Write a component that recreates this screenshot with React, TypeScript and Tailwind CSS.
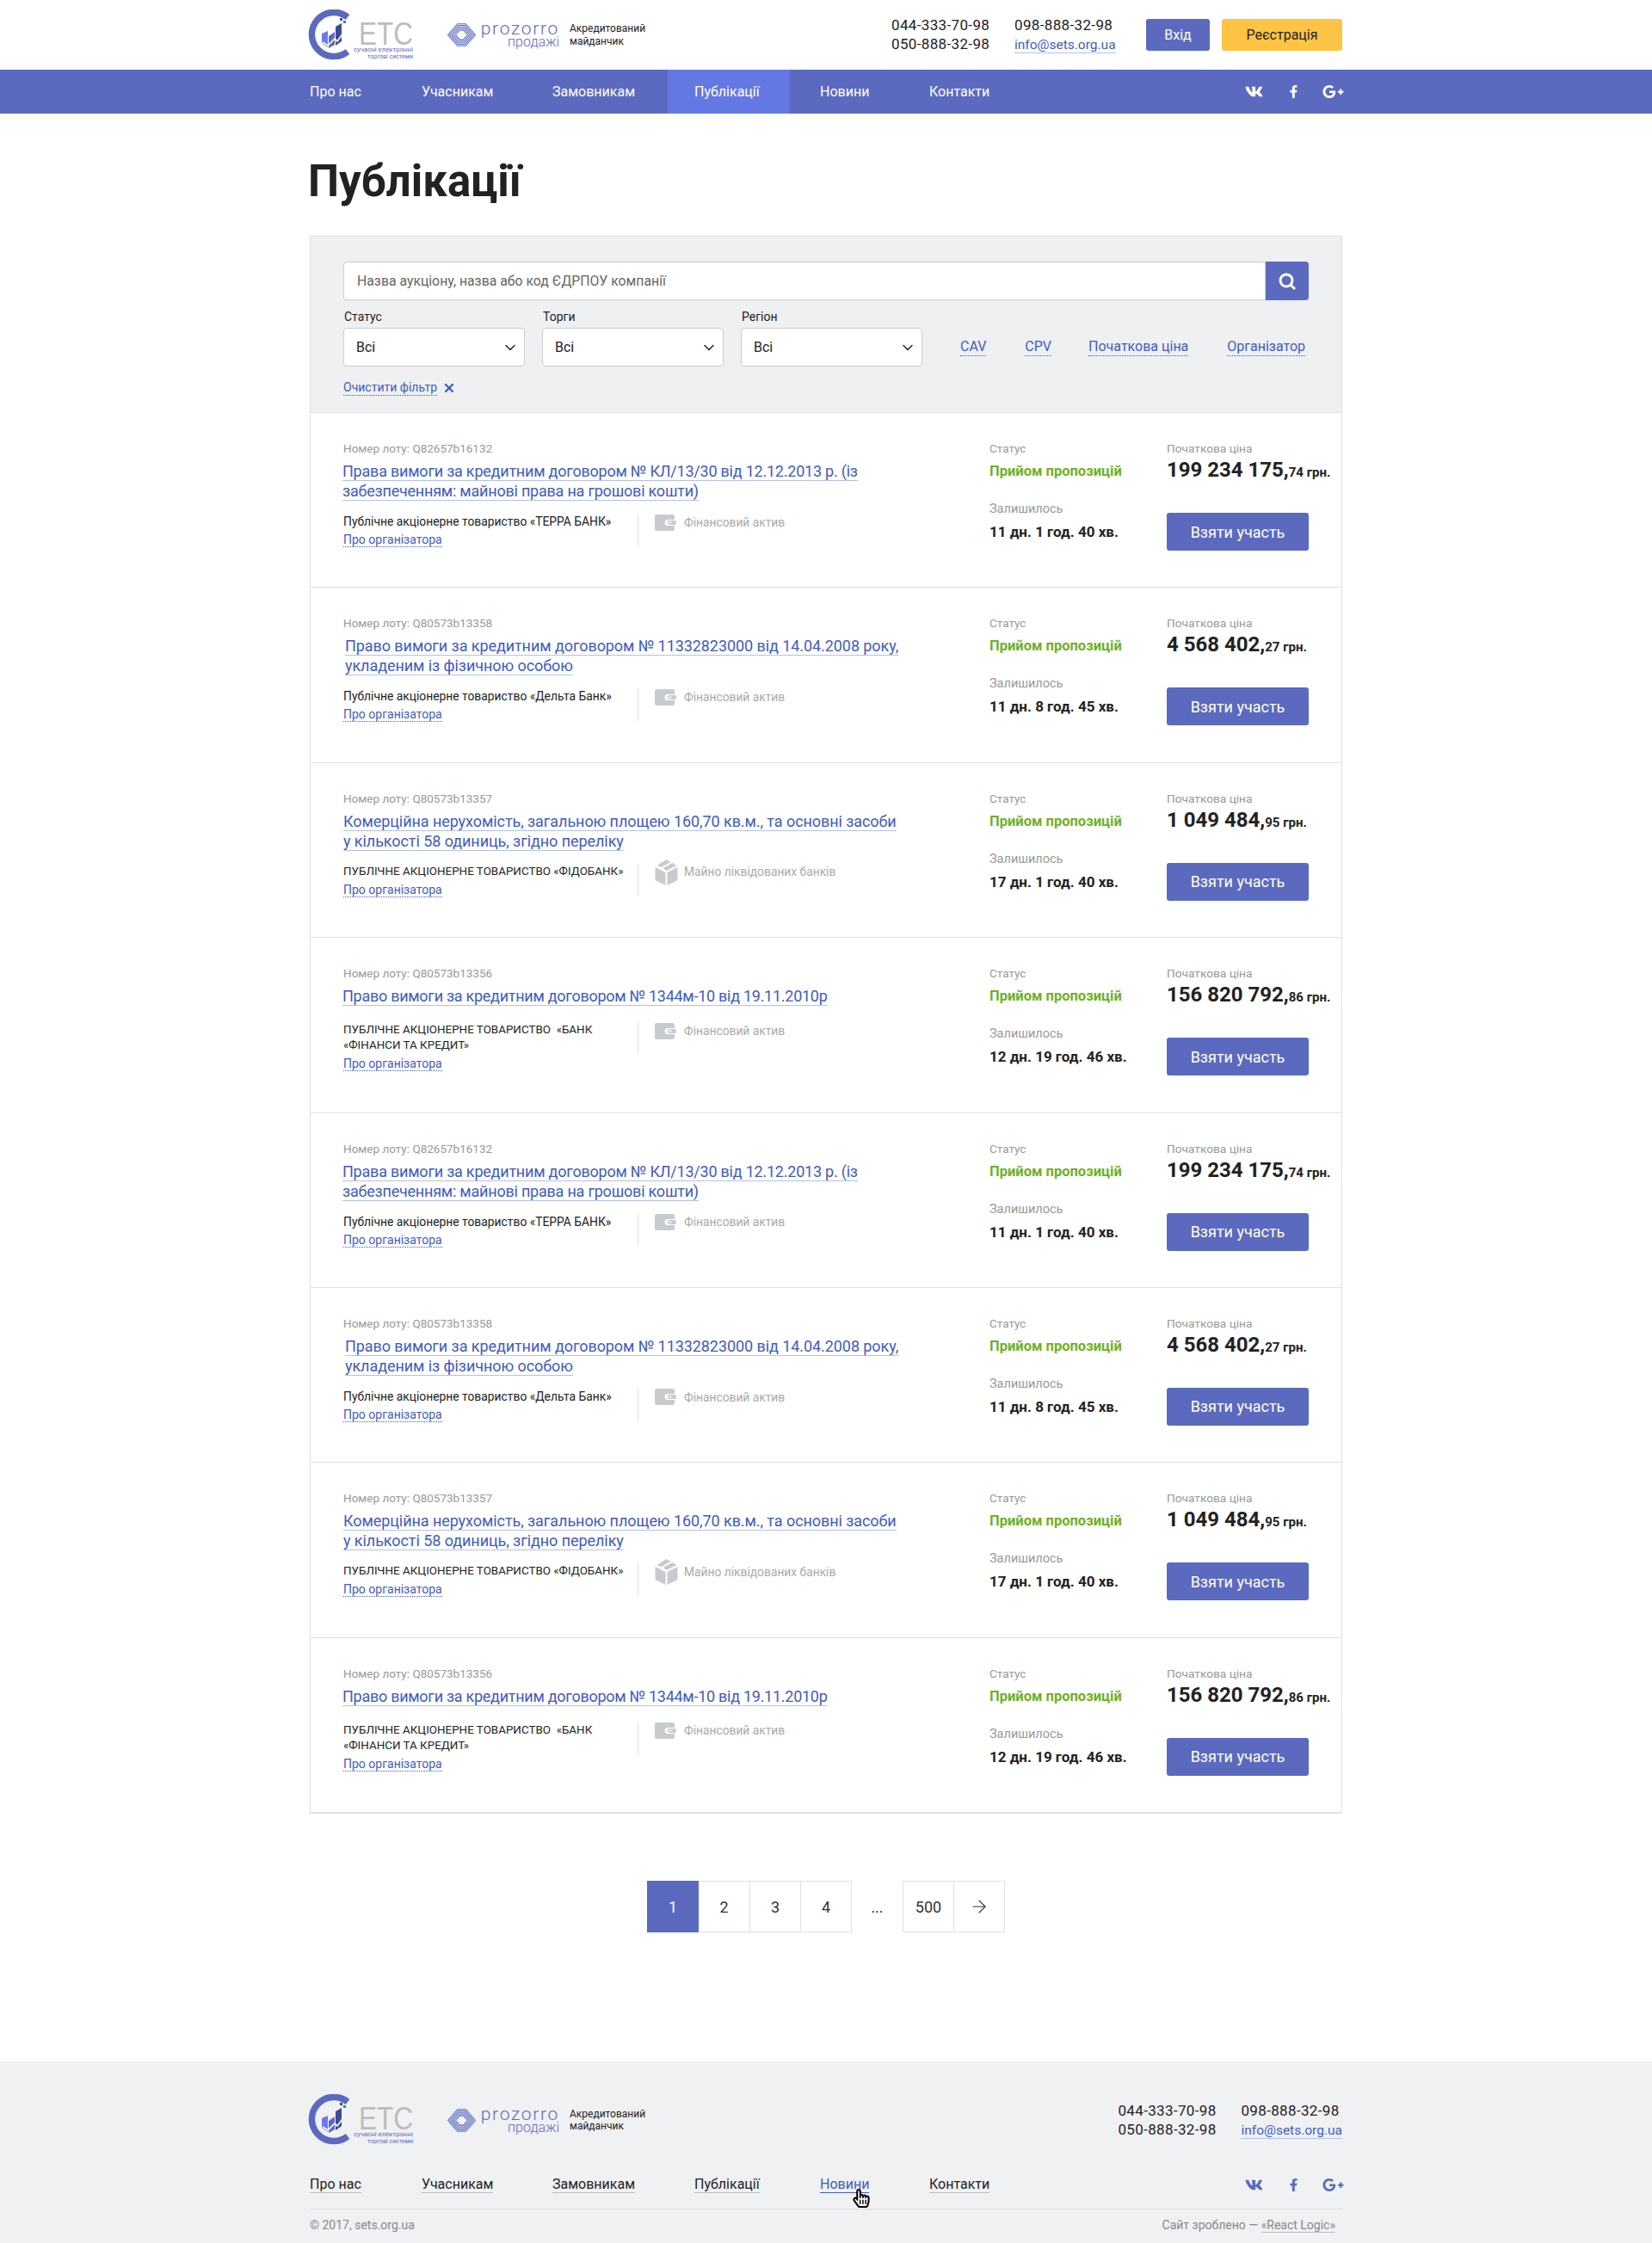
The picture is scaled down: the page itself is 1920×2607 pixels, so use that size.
import React from "react";
import { FaVk, FaFacebookF, FaGooglePlusG, FaRegHandPointer, FaHandPointer } from "react-icons/fa";
import { ChevronDown, ArrowRight, X } from "lucide-react";

const font = "[font-family:Roboto,'Noto_Sans',sans-serif]";

function EtsLogo() {
  return (
    <svg width="140" height="60" viewBox="0 0 140 60" className="-mr-[16px] shrink-0">
      <path d="M46 9 A25.6 25.6 0 1 0 46 49" fill="none" stroke="#5b6abf" strokeWidth="7.5" />
      <g transform="translate(-6 -1)">
        <path d="M22 29 l7 -3 v19 l-7 -5z" fill="#7079ee" />
        <path d="M30 32 l7 -5 v15 l-7 4z" fill="#5b6abf" />
        <path d="M38 21 l7 -4 v21 l-7 5z" fill="#3d4a94" />
        <path d="M23 39 l6 4 l8 -8 l3 3 l8 -11" fill="none" stroke="#fff" strokeWidth="1.6" />
        <rect x="43" y="11" width="3" height="3" fill="#3d4a94" />
        <rect x="47" y="14" width="3" height="3" fill="#5b6abf" />
        <rect x="47" y="9" width="2" height="2" fill="#5b6abf" />
      </g>
      <text x="59" y="41" fontFamily="Liberation Sans, sans-serif" fontSize="37" fill="#bdbdbd" textLength="63" lengthAdjust="spacingAndGlyphs">ЕТС</text>
      <text x="122" y="49" textAnchor="end" fontFamily="Roboto, sans-serif" fontSize="8" fill="#5b6abf" textLength="69" lengthAdjust="spacingAndGlyphs">сучасні електронні</text>
      <text x="122" y="56.5" textAnchor="end" fontFamily="Roboto, sans-serif" fontSize="8" fill="#5b6abf" textLength="53" lengthAdjust="spacingAndGlyphs">торгові системи</text>
    </svg>
  );
}

function ProzorroLogo() {
  return (
    <div className="flex items-center">
      <svg width="33" height="27" viewBox="0 0 33 27" className="shrink-0">
        {[16, 13.8, 11.6, 9.4, 7].map((r) => (
          <path key={r} d={`M${16.5 - r} 13.5 L${16.5 - r * 0.3} ${13.5 - r * 0.8} H${16.5 + r * 0.3} L${16.5 + r} 13.5 L${16.5 + r * 0.3} ${13.5 + r * 0.8} H${16.5 - r * 0.3}Z`} fill="none" stroke="#5b6abf" strokeWidth="1.1" />
        ))}
      </svg>
      <div className="ml-[5px] w-[92px] text-right text-[#5b6abf]">
        <div className="text-[21px] leading-[17px] font-light tracking-[1.7px]">prozorro</div>
        <div className="text-[16px] leading-[14px] font-light">продажі</div>
      </div>
      <div className="ml-[12px] text-[12px] leading-[14.5px] text-[#222]">
        <div>Акредитований</div>
        <div>майданчик</div>
      </div>
    </div>
  );
}

function Socials({ color }: { color: string }) {
  return (
    <div className={`-mr-[2px] flex items-center ${color}`}>
      <FaVk className="text-[21px]" />
      <FaFacebookF className="ml-[28px] text-[15px]" />
      <FaGooglePlusG className="ml-[26px] text-[25px]" />
    </div>
  );
}

const navItems = [
  { t: "Про нас", w: "w-[130px]" },
  { t: "Учасникам", w: "w-[152px]" },
  { t: "Замовникам", w: "w-[134px]" },
];

function Contacts() {
  return (
    <div className="flex text-[17px] leading-[22px] text-[#222] tracking-[0.35px]">
      <div className="w-[143px]">
        <div>044-333-70-98</div>
        <div>050-888-32-98</div>
      </div>
      <div>
        <div>098-888-32-98</div>
        <a className="border-b border-[#b5bfe8] text-[15.500px] tracking-[0px] text-[#3f5bc4]">info@sets.org.ua</a>
      </div>
    </div>
  );
}

function Header() {
  return (
    <header>
      <div className="mx-auto flex h-[81px] w-[1200px] items-center">
        <div className="-ml-[2px] flex items-center">
          <EtsLogo />
          <div className="ml-[38px]"><ProzorroLogo /></div>
        </div>
        <div className="ml-auto flex items-center">
          <div className="w-[296px]"><Contacts /></div>
          <button className="h-[37px] w-[74px] rounded-[3px] bg-[#5b6abf] text-[16px] text-white">Вхід</button>
          <button className="ml-[14px] h-[37px] w-[140px] rounded-[3px] bg-[#ffc445] text-[16px] text-[#222]">Реєстрація</button>
        </div>
      </div>
      <nav className="h-[51px] bg-[#5b6abf]">
        <div className="mx-auto flex h-full w-[1200px] items-center text-[16px] text-white">
          {navItems.map((n) => (
            <a key={n.t} className={`${n.w} shrink-0`}>{n.t}</a>
          ))}
          <a className="flex h-full w-[142px] shrink-0 items-center bg-[#6478e4] pl-[31px]">Публікації</a>
          <a className="w-[162px] shrink-0 pl-[35px]">Новини</a>
          <a>Контакти</a>
          <div className="ml-auto"><Socials color="text-white" /></div>
        </div>
      </nav>
    </header>
  );
}

function Select({ label }: { label: string }) {
  return (
    <div className="w-[211px]">
      <div className="pl-px text-[14px] leading-[16px] text-[#222]">{label}</div>
      <div className="mt-[5px] flex h-[45px] items-center justify-between rounded-[4px] border border-[#c9cbcf] bg-white pl-[14px] pr-[6px] text-[16px] text-[#222]">
        <span>Всі</span>
        <ChevronDown size={20} strokeWidth={1.8} />
      </div>
    </div>
  );
}

function DotLink({ children, className = "" }: { children: React.ReactNode; className?: string }) {
  return <a className={`border-b border-dotted border-[#3f5bc4] text-[#3f5bc4] ${className}`}>{children}</a>;
}

function Filter() {
  return (
    <div className="h-[205px] border-b border-[#dfe0e2] bg-[#eff0f2] px-[38px] pt-[29px]">
      <div className="flex h-[45px] w-[1122px]">
        <div className="flex flex-1 items-center rounded-l-[4px] border border-[#c9cbcf] bg-white pl-[15px] text-[15.8px] text-[#666]">Назва аукціону, назва або код ЄДРПОУ компанії</div>
        <button className="flex w-[50px] items-center justify-center rounded-r-[4px] bg-[#5b6abf]">
          <svg width="22" height="22" viewBox="0 0 22 22" fill="none" stroke="#fff" strokeWidth="3"><circle cx="10" cy="10" r="7" /><path d="M15 15l5 5" /></svg>
        </button>
      </div>
      <div className="mt-[11px] flex items-end">
        <Select label="Статус" />
        <div className="ml-[20px]"><Select label="Торги" /></div>
        <div className="ml-[20px]"><Select label="Регіон" /></div>
        <div className="flex h-[45px] items-center text-[16px] leading-[20px]">
          <DotLink className="ml-[44px]">CAV</DotLink>
          <DotLink className="ml-[45px]">CPV</DotLink>
          <DotLink className="ml-[43px]">Початкова ціна</DotLink>
          <DotLink className="ml-[45px]">Організатор</DotLink>
        </div>
      </div>
      <div className="mt-[16px] flex items-center text-[14px] leading-[17px]">
        <DotLink>Очистити фільтр</DotLink>
        <X size={16} strokeWidth={3.5} className="ml-[6px] text-[#3f5bc4]" />
      </div>
    </div>
  );
}

function Wallet() {
  return (
    <svg width="25" height="19" viewBox="0 0 25 19" className="shrink-0">
      <path d="M2 0h19a2 2 0 0 1 2 2v4H15a3.500 3.500 0 0 0 0 7h8v4a2 2 0 0 1-2 2H2a2 2 0 0 1-2-2V2a2 2 0 0 1 2-2z" fill="#c8cbce" />
      <rect x="15" y="7" width="10" height="5" rx="2" fill="#c8cbce" />
      <circle cx="18" cy="9.500" r="1.300" fill="#fff" />
    </svg>
  );
}

function Box() {
  return (
    <svg width="27" height="30" viewBox="0 0 26 30" className="shrink-0">
      <path d="M0 9 L12 15 V30 L0 24z" fill="#c8cbce" />
      <path d="M14 15 L26 9 V24 L14 30z" fill="#c8cbce" />
      <path d="M13 0 L18 3 L7 9 L2 7z" fill="#c8cbce" />
      <path d="M20 4 L25 7 L13 13 L9 10z" fill="#c8cbce" />
    </svg>
  );
}

type Lot = {
  no: string; title: string[]; org: string[]; orgCls: string; kind: "f" | "m"; left: string; price: string; cents: string; titleCls: string;
};

const lots: Lot[] = [
  { no: "Q82657b16132", title: ["Права вимоги за кредитним договором № КЛ/13/30 від 12.12.2013 р. (із", "забезпеченням: майнові права на грошові кошти)"], org: ["Публічне акціонерне товариство «ТЕРРА БАНК»"], orgCls: "text-[13.85px]", kind: "f", left: "11 дн. 1 год. 40 хв.", price: "199 234 175,", cents: "74", titleCls: "-ml-[1px] tracking-[-0.22px]" },
  { no: "Q80573b13358", title: ["Право вимоги за кредитним договором № 11332823000 від 14.04.2008 року,", "укладеним із фізичною особою"], org: ["Публічне акціонерне товариство «Дельта Банк»"], orgCls: "text-[13.85px]", kind: "f", left: "11 дн. 8 год. 45 хв.", price: "4 568 402,", cents: "27", titleCls: "pl-[2px] tracking-[-0.07px]" },
  { no: "Q80573b13357", title: ["Комерційна нерухомість, загальною площею 160,70 кв.м., та основні засоби", "у кількості 58 одиниць, згідно переліку"], org: ["ПУБЛІЧНЕ АКЦІОНЕРНЕ ТОВАРИСТВО «ФІДОБАНК»"], orgCls: "text-[13.4px]", kind: "m", left: "17 дн. 1 год. 40 хв.", price: "1 049 484,", cents: "95", titleCls: "tracking-[-0.07px]" },
  { no: "Q80573b13356", title: ["Право вимоги за кредитним договором № 1344м-10 від 19.11.2010р"], org: ["ПУБЛІЧНЕ АКЦІОНЕРНЕ ТОВАРИСТВО  «БАНК", "«ФІНАНСИ ТА КРЕДИТ»"], orgCls: "text-[13.4px]", kind: "f", left: "12 дн. 19 год. 46 хв.", price: "156 820 792,", cents: "86", titleCls: "-ml-[1px] tracking-[-0.27px]" },
];

function LotRow({ lot }: { lot: Lot }) {
  return (
    <div className="flex h-[203.4px] border-b border-[#dfe0e2] pl-[38px] pt-[32px]">
      <div className="w-[751px] shrink-0">
        <div className="text-[13.5px] leading-[18px] text-[#999]">Номер лоту: {lot.no}</div>
        <div className={`mt-[6px] text-[18px] leading-[23px] text-[#3f5bc4] ${lot.titleCls} ${lot.title.length === 1 ? "mb-[23px]" : ""}`}>
          {lot.title.map((l) => (
            <div key={l}><span className="border-b border-[#b5bfe8]">{l}</span></div>
          ))}
        </div>
        <div className={`flex ${lot.title.length === 1 ? "mt-[-4px]" : "mt-[15px]"}`}>
          <div className={`w-[342px] shrink-0 leading-[18px] text-[#222] ${lot.orgCls}`}>
            {lot.org.map((o) => <div key={o} className="whitespace-pre">{o}</div>)}
            <div className="mt-[3px] text-[14px] leading-[18px]"><DotLink>Про організатора</DotLink></div>
          </div>
          <div className="flex h-[38px] items-start border-l border-[#dfe0e2] pl-[19px]">
            <div className="flex h-[20px] items-center text-[13.8px] text-[#aaa]">
              {lot.kind === "f" ? <Wallet /> : <Box />}
              <span className={lot.kind === "f" ? "ml-[9px]" : "ml-[7px]"}>{lot.kind === "f" ? "Фінансовий актив" : "Майно ліквідованих банків"}</span>
            </div>
          </div>
        </div>
      </div>
      <div className="w-[206px] shrink-0">
        <div className="text-[13.5px] leading-[18px] text-[#999]">Статус</div>
        <div className="mt-[8px] text-[16.5px] font-bold leading-[20px] text-[#6eb11f]">Прийом пропозицій</div>
        <div className="mt-[25px] text-[14.5px] leading-[18px] text-[#999]">Залишилось</div>
        <div className="mt-[7px] text-[17px] font-bold leading-[20px] text-[#222]">{lot.left}</div>
      </div>
      <div className="flex flex-col">
        <div className="text-[13.7px] leading-[18px] text-[#999]">Початкова ціна</div>
        <div className="mt-[3px] whitespace-nowrap font-bold leading-[26px] text-[#222]">
          <span className="text-[24px]">{lot.price}</span>
          <span className="text-[15px]">{lot.cents} грн.</span>
        </div>
        <button className="mt-[34px] h-[44px] w-[165px] rounded-[3px] bg-[#5b6abf] text-[18px] text-white">Взяти участь</button>
      </div>
    </div>
  );
}

function Pagination() {
  const cell = "flex h-[60px] w-[60px] items-center justify-center border border-[#dfe0e2] text-[18px] text-[#333]";
  return (
    <div className="flex justify-center">
      <div className="flex">
        <div className="flex h-[60px] w-[60px] items-center justify-center bg-[#5b6abf] text-[18px] text-white">1</div>
        <div className={`${cell} border-l-0`}>2</div>
        <div className={`${cell} -ml-px w-[60px] border-l`}>3</div>
        <div className={`${cell} -ml-px`}>4</div>
        <div className="flex h-[60px] w-[59px] items-center justify-center text-[18px] text-[#333]">...</div>
        <div className={cell}>500</div>
        <div className={`${cell} -ml-px`}><ArrowRight size={24} strokeWidth={1.1} /></div>
      </div>
    </div>
  );
}

function Footer() {
  const items = [
    { t: "Про нас", w: "w-[130px]" },
    { t: "Учасникам", w: "w-[152px]" },
    { t: "Замовникам", w: "w-[165px]" },
    { t: "Публікації", w: "w-[146px]" },
  ];
  return (
    <footer className="h-[211px] bg-[#f0f1f3]">
      <div className="mx-auto w-[1200px]">
        <div className="flex items-center pt-[38px]">
          <div className="-ml-[2px] flex items-center">
            <EtsLogo />
            <div className="ml-[38px]"><ProzorroLogo /></div>
          </div>
          <div className="ml-auto"><Contacts /></div>
        </div>
        <div className="mt-[34px] flex h-[22px] items-center text-[16px] text-[#222]">
          {items.map((n) => (
            <div key={n.t} className={`${n.w} shrink-0`}><a className="border-b border-[#bdbdbd]">{n.t}</a></div>
          ))}
          <div className="relative w-[127px] shrink-0">
            <a className="border-b border-[#3f5bc4] text-[#3f5bc4]">Новини</a>
            <FaHandPointer className="absolute left-[37px] top-[17px] text-[22px] text-white" />
            <FaRegHandPointer className="absolute left-[37px] top-[17px] text-[22px] text-black" />
          </div>
          <div><a className="border-b border-[#bdbdbd]">Контакти</a></div>
          <div className="ml-auto"><Socials color="text-[#5b6abf]" /></div>
        </div>
        <div className="mt-[17px] flex h-[38px] items-center justify-between border-t border-[#dcdddf] text-[14px] text-[#888]">
          <span>© 2017, sets.org.ua</span>
          <span className="pr-[8px]">Сайт зроблено — <a className="border-b border-[#bdbdbd]">«React Logic»</a></span>
        </div>
      </div>
    </footer>
  );
}

export default function App() {
  return (
    <div className={`${font} bg-white text-[#222]`}>
      <Header />
      <main className="mx-auto h-[2264px] w-[1200px]">
        <h1 className="-ml-[2px] pt-[48px] text-[51px] font-bold leading-[62px] text-[#222]">Публікації</h1>
        <div className="mt-[32px] border border-[#dfe0e2]">
          <Filter />
          {[...lots, ...lots].map((l, i) => <LotRow key={i} lot={l} />)}
        </div>
        <div className="mt-[78px]"><Pagination /></div>
      </main>
      <Footer />
    </div>
  );
}
